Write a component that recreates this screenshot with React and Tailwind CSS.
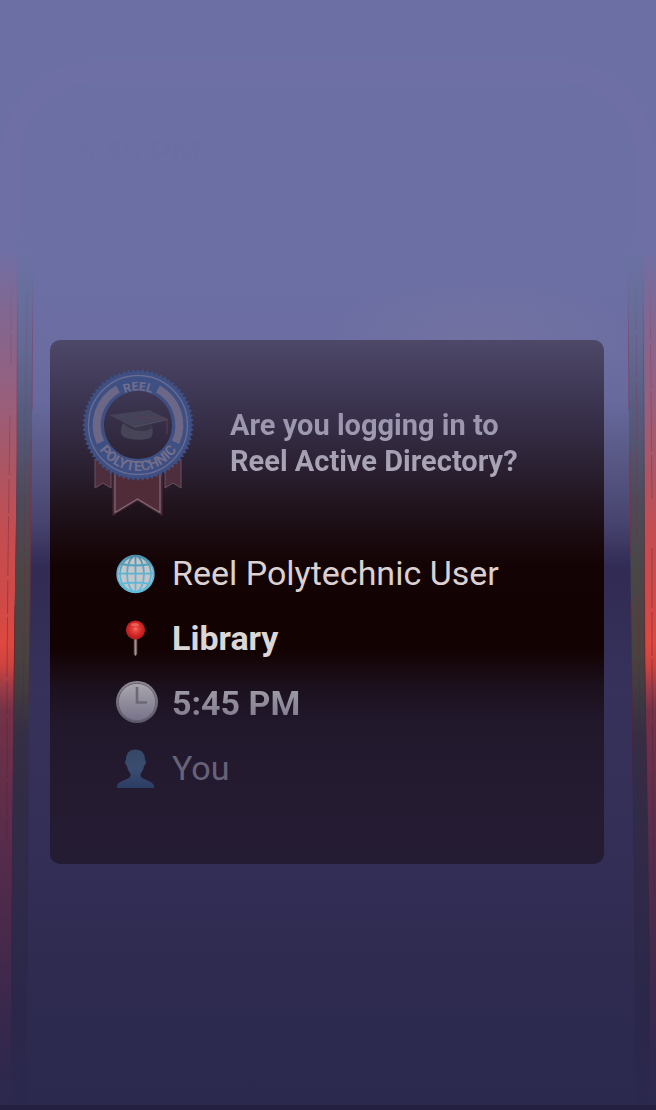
import React from "react";

const TEETH = Array.from({ length: 72 }, (_, i) => {
  const a = (i / 72) * Math.PI * 2;
  const b = ((i + 0.5) / 72) * Math.PI * 2;
  return `${56 + 56 * Math.cos(a)},${56 + 56 * Math.sin(a)} ${56 + 53 * Math.cos(b)},${56 + 53 * Math.sin(b)}`;
}).join(" ");

function Backdrop() {
  return (
    <svg
      className="absolute inset-0 h-full w-full"
      viewBox="0 0 656 1110"
      preserveAspectRatio="none"
      aria-hidden="true"
    >
      <defs>
        <linearGradient id="grey" gradientUnits="userSpaceOnUse" x1="0" y1="0" x2="0" y2="1110">
          <stop offset="0.225" stopColor="#6c70a5" />
          <stop offset="0.26" stopColor="#676f9d" />
          <stop offset="0.31" stopColor="#636a94" />
          <stop offset="0.38" stopColor="#555a7b" />
          <stop offset="0.45" stopColor="#4b4b5a" />
          <stop offset="0.52" stopColor="#4a4645" />
          <stop offset="0.59" stopColor="#484341" />
          <stop offset="0.62" stopColor="#403c40" />
          <stop offset="0.66" stopColor="#342f44" />
          <stop offset="0.76" stopColor="#302b47" />
          <stop offset="0.9" stopColor="#2b274a" />
          <stop offset="1" stopColor="#2b284e" />
        </linearGradient>
        <linearGradient id="red" gradientUnits="userSpaceOnUse" x1="0" y1="0" x2="0" y2="1110">
          <stop offset="0.225" stopColor="#6e6fa5" />
          <stop offset="0.25" stopColor="#786b9b" />
          <stop offset="0.3" stopColor="#86658c" />
          <stop offset="0.36" stopColor="#985f7c" />
          <stop offset="0.42" stopColor="#ab5664" />
          <stop offset="0.48" stopColor="#c44d50" />
          <stop offset="0.54" stopColor="#cf4a48" />
          <stop offset="0.58" stopColor="#dc493f" />
          <stop offset="0.6" stopColor="#cd433f" />
          <stop offset="0.62" stopColor="#9a3b49" />
          <stop offset="0.64" stopColor="#743247" />
          <stop offset="0.76" stopColor="#572c4b" />
          <stop offset="0.86" stopColor="#44294b" />
          <stop offset="0.95" stopColor="#31284d" />
          <stop offset="1" stopColor="#2b284e" />
        </linearGradient>
        <linearGradient id="seam" gradientUnits="userSpaceOnUse" x1="0" y1="0" x2="0" y2="1110">
          <stop offset="0.24" stopColor="#7b5683" stopOpacity="0" />
          <stop offset="0.3" stopColor="#7c4c76" />
          <stop offset="0.45" stopColor="#7b2f42" />
          <stop offset="0.6" stopColor="#761d27" />
          <stop offset="0.68" stopColor="#4b203e" />
          <stop offset="0.85" stopColor="#35213f" stopOpacity="0.7" />
          <stop offset="0.93" stopColor="#30244a" stopOpacity="0" />
        </linearGradient>
        <linearGradient id="frame" gradientUnits="userSpaceOnUse" x1="0" y1="0" x2="0" y2="1110">
          <stop offset="0.2" stopColor="#716fa5" />
          <stop offset="0.24" stopColor="#716fa5" stopOpacity="0" />
        </linearGradient>
        <radialGradient id="haze">
          <stop offset="0" stopColor="#7775a1" stopOpacity="0.6" />
          <stop offset="1" stopColor="#7775a1" stopOpacity="0" />
        </radialGradient>
      </defs>
      <path
        d="M11 300V156A84 84 0 0 1 95 72H561A84 84 0 0 1 645 156V300"
        fill="none"
        stroke="url(#frame)"
        strokeWidth="20"
        opacity="0.5"
      />
      <ellipse cx="480" cy="345" rx="160" ry="70" fill="url(#haze)" />
      <path d="M0 250H18L17 450L14 660L11 1000V1105H0Z" fill="url(#red)" />
      <path d="M18 250H33L32 450L29 680L27 1000V1105H11V1000L14 660L17 450Z" fill="url(#grey)" />
      <path d="M656 250H644L645 660L650 1000V1105H656Z" fill="url(#red)" />
      <path d="M628 250H644L645 660L650 1000V1105H635V1000L632 680L629 450Z" fill="url(#grey)" />
      <g fill="none" stroke="url(#seam)">
        <path
          strokeOpacity="0.8"
          d="M17.5 265L17 410V555M15 606L14 690L12 900L11 1045M33 265L32 410M31 440L30 600L29 704M28 746L27 1050"
        />
        <path
          d="M11 270V365M10 415L8 560L7 675L7 840M27 290L25 460L24 640L23 730"
          strokeDasharray="60 4 34 3"
          strokeOpacity="0.5"
        />
        <path
          strokeOpacity="0.8"
          d="M628 265L629 410M630 450L631 556M631 602L632 700L635 930V1060M643 265L644 480L645 680L648 850L650 1030"
        />
        <path
          d="M636 270L637 540M638 596L640 730L641 880M650 280L652 500M652 548V660L654 900"
          strokeDasharray="60 4 44 3"
          strokeOpacity="0.5"
        />
      </g>
      <rect y="1105" width="656" height="5" fill="#242041" />
    </svg>
  );
}

function Badge() {
  return (
    <svg className="h-[148px] w-[112px] shrink-0" viewBox="0 0 112 148" role="img" aria-label="Reel Polytechnic">
      <defs>
        <path id="arc-top" d="M21.500 56A34.500 34.500 0 0 1 90.500 56" />
        <path id="arc-bottom" d="M11.100 46A46 46 0 1 0 100.900 46" />
      </defs>
      <path d="M13 90H29V119L21 114L13 119ZM83 90H99V119L91 114L83 119Z" fill="#4e2d3c" stroke="#6a5166" strokeWidth="1" />
      <path d="M30.500 98H80.500V147L55.500 132L30.500 147Z" fill="#4b2833" />
      <path d="M33 98V143.500L55.500 130L78 143.500V98" fill="#502c38" stroke="#826a7b" strokeWidth="1.200" />
      <path fillRule="evenodd" d={`M${TEETH.split(" ").join("L")}ZM56 22A34 34 0 1 0 56.010 22Z`} fill="#3d4f83" />
      <circle cx="56" cy="56" r="49.500" fill="none" stroke="#686a91" strokeWidth="1.400" />
      <path
        d="M36 20A41.200 41.200 0 0 0 18.500 73.500M76 20A41.200 41.200 0 0 1 93.500 73.500"
        fill="none"
        stroke="#6c6786"
        strokeWidth="8"
      />
      <path d="M41 53C39 60 37 65 42 68C48 71.500 62 71.500 68 69C72 66 71 61 69 53Z" fill="#474458" />
      <path d="M40 52C44 61 62 65 70 59L69 52Z" fill="#393549" />
      <path d="M27 46L67 41L86 50L53 57Z" fill="#45435a" />
      <path d="M27 46L53 57L86 50V51L53 58.500Z" fill="#504c62" />
      <path d="M56 48L85 50V65" fill="none" stroke="#5a3f50" strokeWidth="1" />
      <g fill="#736e8b" textAnchor="middle" className="font-['Roboto',sans-serif] font-bold">
        <text fontSize="12">
          <textPath href="#arc-top" startOffset="50%">REEL</textPath>
        </text>
        <text fontSize="14">
          <textPath href="#arc-bottom" startOffset="50%">POLYTECHNIC</textPath>
        </text>
      </g>
    </svg>
  );
}

function Icon({ children }) {
  return (
    <svg className="h-11 w-[42px] shrink-0 overflow-visible" viewBox="0 0 42 44" aria-hidden="true">
      {children}
    </svg>
  );
}

function Globe() {
  return (
    <Icon>
      <defs>
        <linearGradient id="globe-line" gradientUnits="userSpaceOnUse" x1="0" y1="3" x2="0" y2="42">
          <stop offset="0" stopColor="#4c8da8" />
          <stop offset="0.5" stopColor="#5fb4d2" />
          <stop offset="1" stopColor="#5fbddc" />
        </linearGradient>
      </defs>
      <circle cx="19.500" cy="22" r="18.300" fill="#c6c5c8" stroke="url(#globe-line)" strokeWidth="1.800" />
      <g fill="none" stroke="url(#globe-line)" strokeWidth="1.800">
        <ellipse cx="19.500" cy="22" rx="15.500" ry="18" />
        <ellipse cx="19.500" cy="22" rx="8.500" ry="18" />
        <path d="M19.500 4V40M1.500 21.700H37.500M4.500 12Q19.500 15 34.500 12M4.500 32Q19.500 29 34.500 32" />
      </g>
    </Icon>
  );
}

function Pin() {
  return (
    <Icon>
      <defs>
        <radialGradient id="pin-head" cx="0.5" cy="0.45" r="0.55">
          <stop offset="0" stopColor="#fb6f68" />
          <stop offset="0.25" stopColor="#e5443e" />
          <stop offset="0.7" stopColor="#cb2222" />
          <stop offset="1" stopColor="#a61d1e" />
        </radialGradient>
        <linearGradient id="needle">
          <stop offset="0" stopColor="#50403e" />
          <stop offset="0.5" stopColor="#a7918e" />
          <stop offset="1" stopColor="#56413e" />
        </linearGradient>
      </defs>
      <path d="M17.700 20H21.300V37L19.500 39L17.700 37Z" fill="url(#needle)" />
      <circle cx="19.500" cy="13" r="9.600" fill="url(#pin-head)" />
      <ellipse cx="19" cy="7.500" rx="4" ry="1.600" fill="#f59894" opacity="0.45" />
    </Icon>
  );
}

function Clock() {
  return (
    <Icon>
      <defs>
        <linearGradient id="clock-rim" x1="0" y1="0" x2="0" y2="1">
          <stop offset="0" stopColor="#8f8a94" />
          <stop offset="1" stopColor="#5b576a" />
        </linearGradient>
        <linearGradient id="clock-face" x1="0" y1="0" x2="0" y2="1">
          <stop offset="0" stopColor="#aaa6ae" />
          <stop offset="1" stopColor="#777289" />
        </linearGradient>
      </defs>
      <circle cx="21" cy="20" r="21" fill="url(#clock-rim)" />
      <circle cx="21" cy="20" r="18.700" fill="url(#clock-face)" stroke="#67626f" strokeWidth="1" />
      <path d="M21 5V20.500H31" fill="none" stroke="#6d6875" strokeWidth="2.600" />
    </Icon>
  );
}

function Person() {
  return (
    <Icon>
      <defs>
        <linearGradient id="person-fill" x1="0" y1="0" x2="0" y2="1">
          <stop offset="0" stopColor="#354866" />
          <stop offset="0.5" stopColor="#3a4d70" />
          <stop offset="1" stopColor="#2c3d64" />
        </linearGradient>
      </defs>
      <path
        d="M19.500 2.500C25.500 2.500 29 6.500 29 13C30.500 13.500 30 18 28 19C27.500 23 25.500 25 24.500 27V29C25.500 33 36 33 38 38.500V41H1V38.500C3 33 13.500 33 14.500 29V27C13.500 25 11.500 23 11 19C9 18 8.500 13.500 10 13C10 6.500 13.500 2.500 19.500 2.500Z"
        fill="url(#person-fill)"
      />
    </Icon>
  );
}

export default function App() {
  return (
    <div className="relative min-h-screen bg-[linear-gradient(to_bottom,#6c6fa4_0%,#6c6fa4_24%,#6b6da1_32%,#686a9e_36%,#575682_42%,#474570_47%,#322c55_51%,#332e56_56%,#36325b_62%,#332e55_78%,#2e2a50_88%,#2b294e_100%)] font-['Roboto',sans-serif]">
      <Backdrop />
      <div className="relative flex flex-col">
        <header className="flex h-[340px] items-start px-[76px] pt-[132px]">
          <time className="text-[34px] leading-10 text-[#6a6ea3]">5:45 PM</time>
        </header>
        <main className="mr-[52px] ml-[50px] rounded-[10px] bg-[linear-gradient(to_bottom,#4e4869_0%,#3d3652_11%,#2f263b_21%,#20131c_32%,#140304_43%,#130202_59%,#1b101c_66%,#21182c_73%,#241b31_88%,#241c33_100%)] pt-[29px] pb-[63px]">
          <div className="flex items-center gap-9 pl-8">
            <Badge />
            <h1 className="bg-[linear-gradient(to_bottom,#9690ad,#aea8b9)] bg-clip-text text-[29px] leading-9 font-bold text-transparent">
              Are you logging in to
              <br />
              Reel Active Directory?
            </h1>
          </div>
          <ul className="mt-6 pl-[66px] text-[34px]">
            <li className="flex h-[65px] items-center gap-3.5 text-[#dbd1d1]">
              <Globe />
              <span>Reel Polytechnic User</span>
            </li>
            <li className="flex h-[65px] items-center gap-3.5 font-bold text-[#dcd7d7]">
              <Pin />
              <span>Library</span>
            </li>
            <li className="flex h-[65px] items-center gap-3.5 font-bold">
              <Clock />
              <span className="bg-[linear-gradient(to_bottom,#aaa5b0,#777288)] bg-clip-text text-transparent">5:45 PM</span>
            </li>
            <li className="flex h-[65px] items-center gap-3.5 text-[#686279]">
              <Person />
              <span>You</span>
            </li>
          </ul>
        </main>
      </div>
    </div>
  );
}
